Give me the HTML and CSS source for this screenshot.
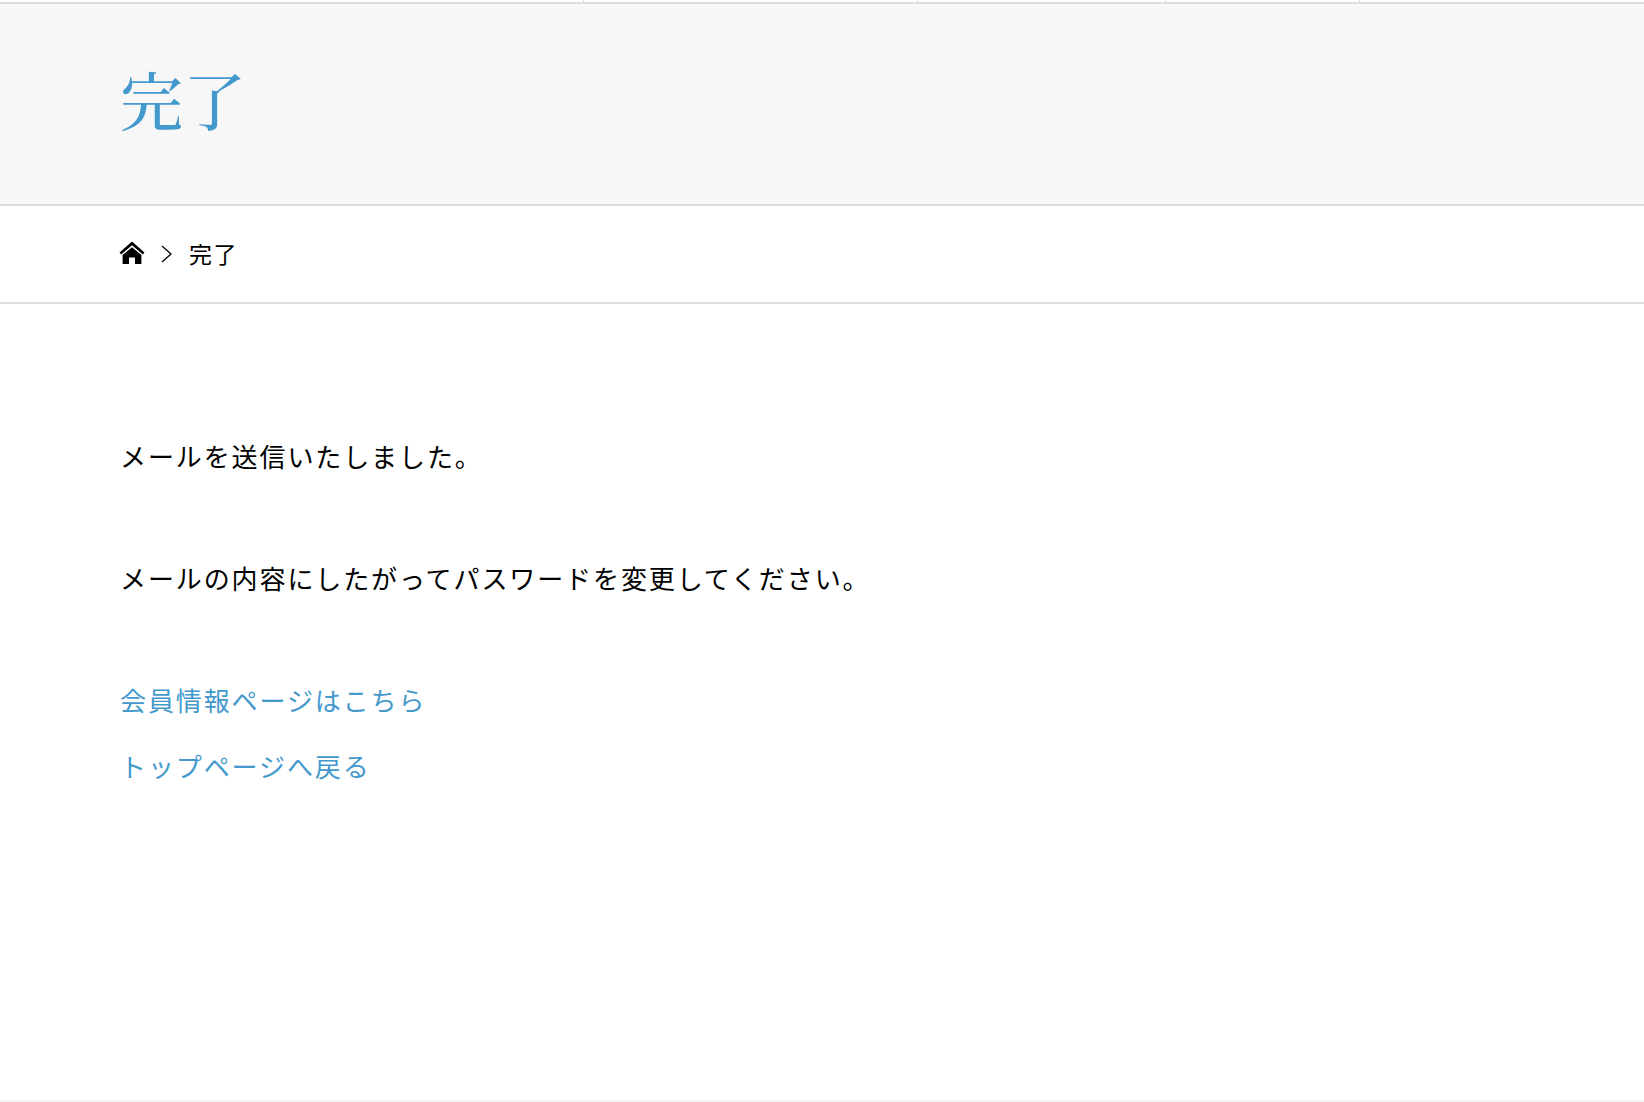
FILE: index.html
```html
<!DOCTYPE html>
<html lang="ja">
<head>
<meta charset="utf-8">
<title>完了</title>
<link rel="stylesheet" href="styles.css">
</head>
<body>
<nav class="topnav">
  <span class="topnav-item topnav-item-1"></span>
  <span class="topnav-item topnav-item-2"></span>
  <span class="topnav-item topnav-item-3"></span>
  <span class="topnav-item topnav-item-4"></span>
</nav>
<header class="page-header">
  <h1 class="page-title">完了</h1>
</header>
<div class="breadcrumb">
  <a class="crumb-home" href="#" aria-label="ホーム">
    <svg class="home-icon" viewBox="0 0 26 24" width="26" height="24"><path d="M13 0.5 L0.5 11.5 L2.2 13.5 L13 4.2 L23.8 13.5 L25.5 11.5 Z" fill="#000"/><path d="M13 6.2 L3.6 14 V23 H10 V16.5 H16 V23 H22.4 V14 Z" fill="#000"/></svg>
  </a>
  <svg class="crumb-sep" viewBox="0 0 11 18" width="11" height="18"><path d="M1 1 L10 9 L1 17" fill="none" stroke="#000" stroke-width="1.3"/></svg>
  <span class="crumb-current">完了</span>
</div>
<main class="content">
  <p class="message">メールを送信いたしました。</p>
  <p class="message">メールの内容にしたがってパスワードを変更してください。</p>
  <p class="link-row"><a class="link" href="#">会員情報ページはこちら</a></p>
  <p class="link-row"><a class="link" href="#">トップページへ戻る</a></p>
</main>
<footer class="page-footer"></footer>
</body>
</html>
```
FILE: styles.css
```css
html, body { margin: 0; padding: 0; background: #fff; }
body {
  height: 1102px;
  overflow: hidden;
  font-family: "Noto Sans CJK JP", "Noto Sans", sans-serif;
  font-weight: 400;
  color: #000;
  display: flex;
  flex-direction: column;
}
.topnav { height: 2px; display: flex; flex: none; }
.topnav-item { width: 1px; height: 2px; background: #ddd; }
.topnav-item-1 { margin-left: 583px; }
.topnav-item-2 { margin-left: 333px; }
.topnav-item-3 { margin-left: 247px; }
.topnav-item-4 { margin-left: 193px; }
.page-header {
  flex: none;
  height: 200px;
  background: #f7f7f7;
  border-top: 2px solid #ddd;
  border-bottom: 2px solid #ddd;
  padding-left: 120px;
  display: flex;
  align-items: flex-start;
}
.page-title {
  margin: 62px 0 0;
  font-family: "Noto Serif CJK JP", "Liberation Serif", "Noto Sans CJK JP", serif;
  font-size: 63px;
  font-weight: 500;
  line-height: 1;
  color: #4499cc;
}
.breadcrumb {
  flex: none;
  height: 96px;
  border-bottom: 2px solid #ddd;
  padding-left: 119px;
  display: flex;
  align-items: center;
  font-size: 23px;
}
.crumb-home { display: flex; margin-top: -2px; }
.crumb-sep { margin-left: 16px; }
.crumb-current { margin-left: 17px; margin-top: -2px; letter-spacing: 1.5px; }
.content { flex: 1; padding: 131px 0 0 120px; }
.message {
  margin: 0 0 80px;
  font-size: 26px;
  line-height: 42px;
  letter-spacing: 1.9px;
}
.link-row {
  margin: 0 0 24px;
  font-size: 26px;
  line-height: 42px;
  letter-spacing: 1.9px;
}
.link { color: #4499cc; text-decoration: none; }
.page-footer { flex: none; height: 2px; background: #f4f4f4; }
```
